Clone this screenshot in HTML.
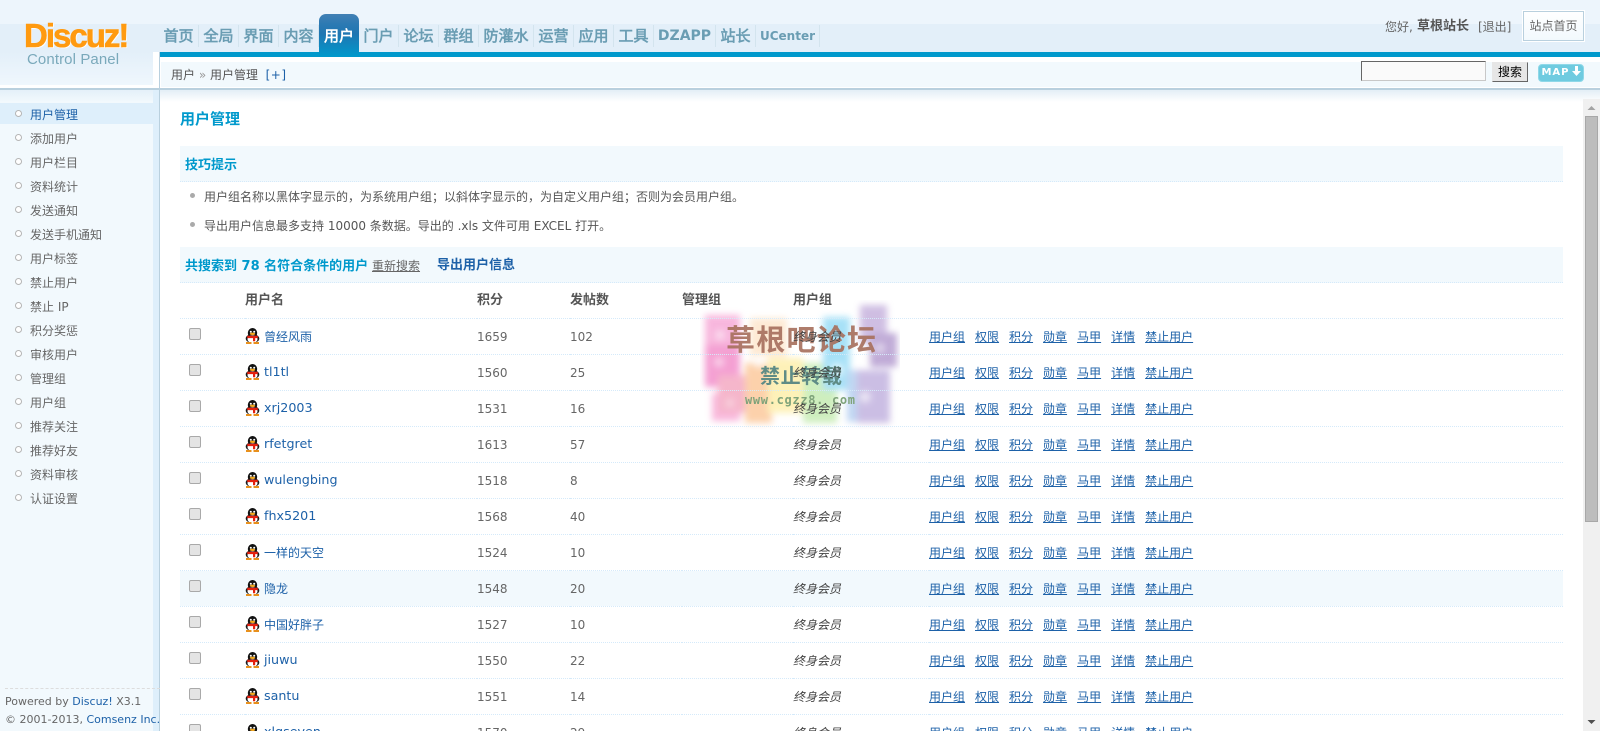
<!DOCTYPE html>
<html lang="zh-CN"><head><meta charset="utf-8"><title>Discuz! Control Panel</title>
<style>
*{box-sizing:border-box}
html,body{margin:0;padding:0;width:1600px;height:731px;overflow:hidden;background:#fff}
body{position:relative;font:12px/16px "DejaVu Sans","WenQuanYi Zen Hei","Noto Sans CJK SC",sans-serif;color:#666}
a{color:#1d61a8;text-decoration:none}
.abs{position:absolute}
#hd{left:0;top:0;width:1600px;height:52px;background:linear-gradient(#edf5fc 0,#edf5fc 24px,#e3eff9 24px,#e3eff9 52px)}
#logobg{left:0;top:52px;width:153px;height:33px;background:linear-gradient(#e3eff9,#eff7fd)}
#logo1{left:24px;top:17px;font:bold 33px/38px "Liberation Sans",sans-serif;letter-spacing:-2px;color:#ff9a10;-webkit-text-stroke:.6px #ff9a10;white-space:nowrap;text-shadow:1px 1px 0 #fff}
#logo2{left:27px;top:51px;font:15px/18px "Liberation Sans",sans-serif;letter-spacing:.1px;color:#7aa9bb;white-space:nowrap}
#nav{left:159px;top:25px;height:26px;white-space:nowrap}
#nav span{position:absolute;top:0;height:22px;text-align:center;font:bold 15px/22px "DejaVu Sans","WenQuanYi Zen Hei",sans-serif;color:#6a9db3;border-right:1px solid #d3e4ee}
#tab{left:319px;top:14px;width:40px;height:43px;border-radius:7px 7px 0 0;background:linear-gradient(#4280b4 0,#2c7ab3 10px,#1f76b2 20px,#0099cc 43px);color:#fff;text-align:center;font:bold 15px/44px "DejaVu Sans","WenQuanYi Zen Hei",sans-serif}
#bar{left:159px;top:52px;width:1441px;height:5px;background:#0099cc}
#leftwhite{left:153px;top:52px;width:6px;height:36px;background:#fff}
#lefttop{left:0;top:85px;width:160px;height:3px;background:#fff}
#crumbbg{left:161px;top:62px;width:1439px;height:25px;background:#f2f9fd}
#line{left:0;top:88px;width:1600px;height:2px;background:#b9d0de}
#side{left:0;top:90px;width:153px;height:641px;background:#f2f9fd}
#sidetop{left:0;top:90px;width:153px;height:12px;background:linear-gradient(#e4f0f9,#f2f9fd)}
#strip{left:153px;top:90px;width:6px;height:641px;background:#deeffb}
#vline{left:159px;top:52px;width:1px;height:679px;background:#b9d0de}
#active{left:0;top:103px;width:153px;height:21px;background:#deeffb}
.m{position:absolute;left:30px;width:100px;height:16px;line-height:16px;white-space:nowrap}
.d{position:absolute;left:15px;width:7px;height:7px;border-radius:50%;background:#fff;border:1px solid #b5b5b5}
#grad{left:160px;top:90px;width:1440px;height:12px;background:linear-gradient(#e3eef6,#fff)}
.t{position:absolute;white-space:nowrap}
.b{font-weight:bold}
.hdr{position:absolute;left:180px;width:1383px;background:#f2f9fd;border-bottom:1px dotted #d5eafa}
#tb{position:absolute;left:180px;top:282px;width:1383px;border-collapse:collapse;table-layout:fixed}
#tb td{height:36px;padding:2px 0 0;border-bottom:1px dotted #d5eafa;vertical-align:middle;white-space:nowrap;position:relative}
#tb tr.h td{font-size:13px;font-weight:bold;color:#555}
#tb tr.on td{background:#f2f9fd}
.cb{display:block;position:relative;top:-3px;margin-left:9px;width:12px;height:12px;border:1px solid #a9a9a9;border-radius:2px;background:#e4e4e4}
.nm{display:flex;align-items:center}
.nm svg{flex:none;margin-right:4px;margin-top:-3px}
.nm a{font-size:12.7px;position:relative;top:-1px}
.nm a.c{font-size:12px;top:0}
#tb i{font-size:12px;color:#444}
.ac a{text-decoration:underline;margin-right:10px}
#sb{left:1583px;top:99px;width:17px;height:632px;background:#f0f0f0}
#thumb{left:1585px;top:116px;width:13px;height:406px;background:#bdbdbd;border:1px solid #a8a8a8}
</style></head><body>
<svg width="0" height="0" style="position:absolute"><defs><symbol id="qq" viewBox="0 0 15 16">
<ellipse cx="7.500" cy="5" rx="4.700" ry="5" fill="#111"/><ellipse cx="7.500" cy="10.500" rx="6.800" ry="4.500" fill="#1a1a1a"/>
<ellipse cx="7.500" cy="11.300" rx="5" ry="3.900" fill="#fff"/>
<circle cx="5.800" cy="3.800" r="1" fill="#fff"/><circle cx="9.200" cy="3.800" r="1" fill="#fff"/>
<ellipse cx="7.500" cy="5.800" rx="2.600" ry="1.200" fill="#f5a81c"/>
<path d="M2.200 7.800h10.600v2.300h-2.600v3.200H8v-3.200H2.200z" fill="#e3200f"/>
<path d="M1 14h5.500v2H1zM8.500 14H14v2H8.500z" fill="#e8901c"/>
</symbol></defs></svg>
<div class="abs" id="hd"></div>
<div class="abs" id="logobg"></div>
<div class="abs" id="logo1">Discuz!</div>
<div class="abs" id="logo2">Control Panel</div>
<div class="abs" id="nav">
<span style="left:0;width:40px">首页</span><span style="left:40px;width:40px">全局</span><span style="left:80px;width:40px">界面</span><span style="left:120px;width:40px">内容</span><span style="left:200px;width:40px">门户</span><span style="left:240px;width:40px">论坛</span><span style="left:280px;width:40px">群组</span><span style="left:320px;width:55px">防灌水</span><span style="left:375px;width:40px">运营</span><span style="left:415px;width:40px">应用</span><span style="left:455px;width:40px">工具</span><span style="left:495px;width:62px;font-size:14px">DZAPP</span><span style="left:557px;width:40px">站长</span><span style="left:597px;width:64px;font-size:12px">UCenter</span>
</div>
<div class="abs" id="bar"></div>
<div class="abs" id="tab">用户</div>
<div class="t" style="left:1385px;top:19px">您好,</div>
<div class="t b" style="left:1417px;top:19px;font-size:13px;color:#555">草根站长</div>
<div class="t" style="left:1478px;top:19px">[退出]</div>
<div class="abs" style="left:1523px;top:11px;width:61px;height:30px;border:1px solid #b9d0de;outline:1px solid #fff;background:linear-gradient(#fff,#f2f9fd);text-align:center;line-height:28px">站点首页</div>

<div class="abs" id="leftwhite"></div>
<div class="abs" id="lefttop"></div>
<div class="abs" style="left:160px;top:57px;width:1440px;height:31px;background:#fff"></div>
<div class="abs" id="crumbbg"></div>
<div class="t" style="left:171px;top:67px;color:#555">用户 <span style="color:#999">»</span> 用户管理 &nbsp;<a href="#" style="letter-spacing:.5px">[+]</a></div>
<div class="abs" style="left:1361px;top:61px;width:125px;height:20px;background:#fafafa;border:1px solid #c8c8c8;border-top-color:#666;border-left-color:#666"></div>
<div class="abs" style="left:1492px;top:62px;width:36px;height:20px;background:#e6e6e6;border:1px solid #e6e6e6;border-right-color:#666;border-bottom-color:#666;color:#000;text-align:center;line-height:19px">搜索</div>
<div class="abs" style="left:1538px;top:64px;width:46px;height:18px;border-radius:4px;background:#6fcbe0;border:1px solid #8fd8e8;color:#fff;font:bold 10px/16px 'DejaVu Sans',sans-serif;text-align:center;letter-spacing:1px;white-space:nowrap">MAP<svg width="9" height="10" viewBox="0 0 9 10" style="margin-left:2px;vertical-align:-1px"><path d="M3 0h3v5h3L4.500 10 0 5h3z" fill="#fff"/></svg></div>

<div class="abs" id="line"></div>
<div class="abs" id="side"></div>
<div class="abs" id="sidetop"></div>
<div class="abs" id="strip"></div>
<div class="abs" id="vline"></div>
<div class="abs" id="active"></div>
<div class="d" style="top:110px"></div><div class="m" style="top:107px;color:#1d61a8">用户管理</div>
<div class="d" style="top:134px"></div><div class="m" style="top:131px">添加用户</div>
<div class="d" style="top:158px"></div><div class="m" style="top:155px">用户栏目</div>
<div class="d" style="top:182px"></div><div class="m" style="top:179px">资料统计</div>
<div class="d" style="top:206px"></div><div class="m" style="top:203px">发送通知</div>
<div class="d" style="top:230px"></div><div class="m" style="top:227px">发送手机通知</div>
<div class="d" style="top:254px"></div><div class="m" style="top:251px">用户标签</div>
<div class="d" style="top:278px"></div><div class="m" style="top:275px">禁止用户</div>
<div class="d" style="top:302px"></div><div class="m" style="top:299px">禁止 IP</div>
<div class="d" style="top:326px"></div><div class="m" style="top:323px">积分奖惩</div>
<div class="d" style="top:350px"></div><div class="m" style="top:347px">审核用户</div>
<div class="d" style="top:374px"></div><div class="m" style="top:371px">管理组</div>
<div class="d" style="top:398px"></div><div class="m" style="top:395px">用户组</div>
<div class="d" style="top:422px"></div><div class="m" style="top:419px">推荐关注</div>
<div class="d" style="top:446px"></div><div class="m" style="top:443px">推荐好友</div>
<div class="d" style="top:470px"></div><div class="m" style="top:467px">资料审核</div>
<div class="d" style="top:494px"></div><div class="m" style="top:491px">认证设置</div>
<div class="abs" style="left:5px;top:688px;width:155px;border-top:1px dashed #ddd"></div>
<div class="t" style="left:5px;top:694px;font-size:11px">Powered by <a href="#">Discuz!</a> X3.1</div>
<div class="t" style="left:5px;top:712px;font-size:11px">© 2001-2013, <a href="#">Comsenz Inc.</a></div>

<div class="abs" id="grad"></div>
<div class="t b" style="left:180px;top:110px;font-size:15px;line-height:18px;color:#0099cc">用户管理</div>
<div class="hdr" style="top:146px;height:36px"></div>
<div class="t b" style="left:185px;top:158px;font-size:13px;color:#0099cc">技巧提示</div>
<div class="abs" style="left:190px;top:193px;width:5px;height:5px;border-radius:50%;background:#aaa"></div>
<div class="t" style="left:204px;top:189px;color:#555">用户组名称以黑体字显示的，为系统用户组；以斜体字显示的，为自定义用户组；否则为会员用户组。</div>
<div class="abs" style="left:190px;top:222px;width:5px;height:5px;border-radius:50%;background:#aaa"></div>
<div class="t" style="left:204px;top:218px;color:#555">导出用户信息最多支持 10000 条数据。导出的 .xls 文件可用 EXCEL 打开。</div>
<div class="hdr" style="top:247px;height:36px"></div>
<div class="t b" style="left:185px;top:259px;font-size:13px;color:#0099cc">共搜索到 78 名符合条件的用户</div>
<div class="t" style="left:372px;top:258px;text-decoration:underline">重新搜索</div>
<div class="t b" style="left:437px;top:258px;font-size:13px;color:#1d61a8">导出用户信息</div>

<svg class="abs" style="left:700px;top:300px" width="200" height="130" viewBox="0 0 200 130">
<defs><filter id="bl" x="-20%" y="-20%" width="140%" height="140%"><feGaussianBlur stdDeviation="3.500"/></filter><filter id="bw" x="-100%" y="-100%" width="300%" height="300%"><feGaussianBlur stdDeviation="4"/></filter></defs>
<g filter="url(#bl)" opacity=".72">
<rect x="5" y="15" width="35" height="30" fill="#f59bd0"/><rect x="5" y="45" width="35" height="42" fill="#f07cc2"/>
<rect x="12" y="93" width="28" height="28" fill="#f79fd0"/><rect x="18" y="75" width="35" height="38" fill="#f29ab8"/>
<rect x="45" y="63" width="27" height="60" fill="#fbc08c"/><rect x="50" y="18" width="37" height="39" fill="#fde2c4"/>
<rect x="68" y="58" width="35" height="55" fill="#fdec9e"/><rect x="103" y="63" width="34" height="60" fill="#bce8a6"/>
<rect x="123" y="17" width="27" height="73" fill="#86d6f4"/><rect x="147" y="70" width="20" height="52" fill="#a8c8ee"/>
<rect x="160" y="5" width="27" height="38" fill="#bda6d8"/><rect x="170" y="33" width="27" height="34" fill="#a88cc8"/>
<rect x="157" y="70" width="33" height="53" fill="#b8a6da"/>
</g>
<g filter="url(#bw)" fill="#fff" opacity=".85"><circle cx="20" cy="35" r="4"/><circle cx="19" cy="62" r="4"/><circle cx="59" cy="62" r="5"/><circle cx="180" cy="48" r="4"/><circle cx="165" cy="97" r="5"/><circle cx="30" cy="103" r="3"/><circle cx="137" cy="70" r="6"/></g>
<text x="26" y="50" font-family="'WenQuanYi Zen Hei','Noto Sans CJK SC',sans-serif" font-weight="bold" font-size="29" fill="#a8715f" opacity=".92" textLength="150">草根吧论坛</text>
<text x="60" y="83" font-family="'WenQuanYi Zen Hei','Noto Sans CJK SC',sans-serif" font-weight="bold" font-size="20" fill="#5f8c86" textLength="82">禁止转载</text>
<text x="45" y="104" font-family="'DejaVu Sans Mono',monospace" font-size="12" font-weight="bold" fill="#7fa37a" textLength="110">www.cgzz8. com</text>
</svg>

<table id="tb">
<colgroup><col style="width:65px"><col style="width:232px"><col style="width:93px"><col style="width:112px"><col style="width:111px"><col style="width:136px"><col></colgroup>
<tr class="h"><td></td><td>用户名</td><td>积分</td><td>发帖数</td><td>管理组</td><td>用户组</td><td></td></tr>
<tr><td><span class="cb"></span></td><td><div class="nm"><svg width="15" height="16"><use href="#qq"/></svg><a class="c" href="#">曾经风雨</a></div></td><td>1659</td><td>102</td><td></td><td><i>终身会员</i></td><td class="ac"><a href="#">用户组</a><a href="#">权限</a><a href="#">积分</a><a href="#">勋章</a><a href="#">马甲</a><a href="#">详情</a><a href="#">禁止用户</a></td></tr>
<tr><td><span class="cb"></span></td><td><div class="nm"><svg width="15" height="16"><use href="#qq"/></svg><a href="#">tl1tl</a></div></td><td>1560</td><td>25</td><td></td><td><i>终身会员</i></td><td class="ac"><a href="#">用户组</a><a href="#">权限</a><a href="#">积分</a><a href="#">勋章</a><a href="#">马甲</a><a href="#">详情</a><a href="#">禁止用户</a></td></tr>
<tr><td><span class="cb"></span></td><td><div class="nm"><svg width="15" height="16"><use href="#qq"/></svg><a href="#">xrj2003</a></div></td><td>1531</td><td>16</td><td></td><td><i>终身会员</i></td><td class="ac"><a href="#">用户组</a><a href="#">权限</a><a href="#">积分</a><a href="#">勋章</a><a href="#">马甲</a><a href="#">详情</a><a href="#">禁止用户</a></td></tr>
<tr><td><span class="cb"></span></td><td><div class="nm"><svg width="15" height="16"><use href="#qq"/></svg><a href="#">rfetgret</a></div></td><td>1613</td><td>57</td><td></td><td><i>终身会员</i></td><td class="ac"><a href="#">用户组</a><a href="#">权限</a><a href="#">积分</a><a href="#">勋章</a><a href="#">马甲</a><a href="#">详情</a><a href="#">禁止用户</a></td></tr>
<tr><td><span class="cb"></span></td><td><div class="nm"><svg width="15" height="16"><use href="#qq"/></svg><a href="#">wulengbing</a></div></td><td>1518</td><td>8</td><td></td><td><i>终身会员</i></td><td class="ac"><a href="#">用户组</a><a href="#">权限</a><a href="#">积分</a><a href="#">勋章</a><a href="#">马甲</a><a href="#">详情</a><a href="#">禁止用户</a></td></tr>
<tr><td><span class="cb"></span></td><td><div class="nm"><svg width="15" height="16"><use href="#qq"/></svg><a href="#">fhx5201</a></div></td><td>1568</td><td>40</td><td></td><td><i>终身会员</i></td><td class="ac"><a href="#">用户组</a><a href="#">权限</a><a href="#">积分</a><a href="#">勋章</a><a href="#">马甲</a><a href="#">详情</a><a href="#">禁止用户</a></td></tr>
<tr><td><span class="cb"></span></td><td><div class="nm"><svg width="15" height="16"><use href="#qq"/></svg><a class="c" href="#">一样的天空</a></div></td><td>1524</td><td>10</td><td></td><td><i>终身会员</i></td><td class="ac"><a href="#">用户组</a><a href="#">权限</a><a href="#">积分</a><a href="#">勋章</a><a href="#">马甲</a><a href="#">详情</a><a href="#">禁止用户</a></td></tr>
<tr class="on"><td><span class="cb"></span></td><td><div class="nm"><svg width="15" height="16"><use href="#qq"/></svg><a class="c" href="#">隐龙</a></div></td><td>1548</td><td>20</td><td></td><td><i>终身会员</i></td><td class="ac"><a href="#">用户组</a><a href="#">权限</a><a href="#">积分</a><a href="#">勋章</a><a href="#">马甲</a><a href="#">详情</a><a href="#">禁止用户</a></td></tr>
<tr><td><span class="cb"></span></td><td><div class="nm"><svg width="15" height="16"><use href="#qq"/></svg><a class="c" href="#">中国好胖子</a></div></td><td>1527</td><td>10</td><td></td><td><i>终身会员</i></td><td class="ac"><a href="#">用户组</a><a href="#">权限</a><a href="#">积分</a><a href="#">勋章</a><a href="#">马甲</a><a href="#">详情</a><a href="#">禁止用户</a></td></tr>
<tr><td><span class="cb"></span></td><td><div class="nm"><svg width="15" height="16"><use href="#qq"/></svg><a href="#">jiuwu</a></div></td><td>1550</td><td>22</td><td></td><td><i>终身会员</i></td><td class="ac"><a href="#">用户组</a><a href="#">权限</a><a href="#">积分</a><a href="#">勋章</a><a href="#">马甲</a><a href="#">详情</a><a href="#">禁止用户</a></td></tr>
<tr><td><span class="cb"></span></td><td><div class="nm"><svg width="15" height="16"><use href="#qq"/></svg><a href="#">santu</a></div></td><td>1551</td><td>14</td><td></td><td><i>终身会员</i></td><td class="ac"><a href="#">用户组</a><a href="#">权限</a><a href="#">积分</a><a href="#">勋章</a><a href="#">马甲</a><a href="#">详情</a><a href="#">禁止用户</a></td></tr>
<tr><td><span class="cb"></span></td><td><div class="nm"><svg width="15" height="16"><use href="#qq"/></svg><a href="#">xlgseven</a></div></td><td>1570</td><td>29</td><td></td><td><i>终身会员</i></td><td class="ac"><a href="#">用户组</a><a href="#">权限</a><a href="#">积分</a><a href="#">勋章</a><a href="#">马甲</a><a href="#">详情</a><a href="#">禁止用户</a></td></tr>
</table>

<div class="abs" id="sb"></div>
<svg class="abs" style="left:1583px;top:99px" width="17" height="17"><path d="M4.500 11L8.500 7l4 4z" fill="#a3a3a3"/></svg>
<div class="abs" id="thumb"></div>
<svg class="abs" style="left:1583px;top:714px" width="17" height="17"><path d="M4.500 6l4 4 4-4z" fill="#505050"/></svg>
</body></html>
